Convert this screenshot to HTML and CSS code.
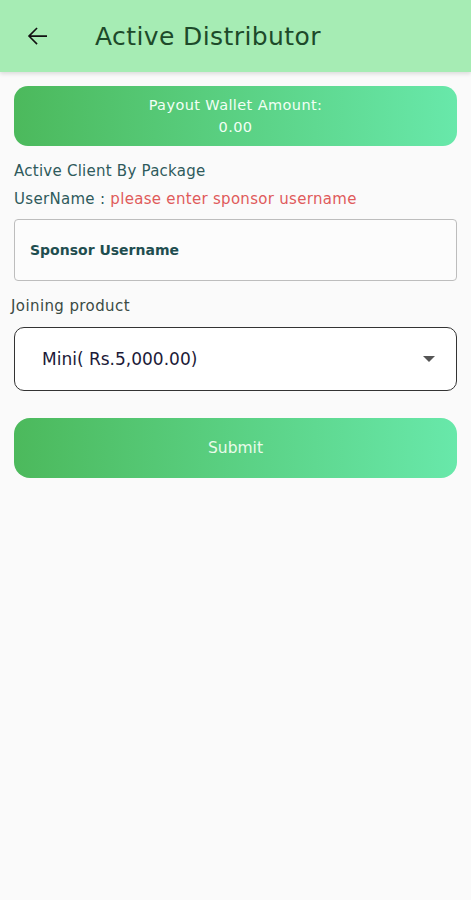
FILE: index.html
```html
<!doctype html>
<html lang="en">
  <head>
    <meta charset="UTF-8" />
    <title>Active Distributor</title>
    <link rel="stylesheet" href="styles.css">
  </head>
  <body>
    <header class="app-bar">
      <button class="back-button" aria-label="Back">
        <svg width="30" height="30" viewBox="0 0 24 24">
          <path d="M20 11.3H7.2l5.3-5.3-0.9-0.9L4.7 12l6.9 6.9 0.9-0.9-5.3-5.3H20z" fill="#111" />
        </svg>
      </button>
      <h1 class="app-title">Active Distributor</h1>
    </header>

    <main class="content">
      <div class="wallet-card">
        <div>Payout Wallet Amount:</div>
        <div>0.00</div>
      </div>

      <div class="section-label">Active Client By Package</div>
      <div class="username-row">
        UserName : <span class="error-text">please enter sponsor username</span>
      </div>

      <div class="input-box">
        <input type="text" placeholder="Sponsor Username" />
      </div>

      <div class="field-label">Joining product</div>
      <div class="select-box">
        <span>Mini( Rs.5,000.00)</span>
        <span class="caret"></span>
      </div>

      <button class="submit-button">Submit</button>
    </main>
  </body>
</html>
```

FILE: styles.css
```css
:root {
  --bar-green: #a6ecb4;
  --grad-start: #4cb95c;
  --grad-end: #68e8aa;
  --teal-text: #2f5a5c;
  --error-red: #e05a5a;
  --page-bg: #fafafa;
}

* {
  box-sizing: border-box;
  margin: 0;
  padding: 0;
}

body {
  font-family: "DejaVu Sans", "Open Sans", sans-serif;
  background-color: var(--page-bg);
  min-height: 900px;
}

.app-bar {
  height: 72px;
  background-color: var(--bar-green);
  display: flex;
  align-items: center;
  box-shadow: 0 2px 4px rgba(0, 0, 0, 0.12);
}

.back-button {
  background: none;
  border: none;
  width: 30px;
  height: 30px;
  margin-left: 22px;
  display: flex;
}

.app-title {
  margin-left: 43px;
  font-size: 25px;
  font-weight: 500;
  color: #1d4a2a;
  letter-spacing: 0.4px;
}

.content {
  padding: 14px 14px 0 14px;
  display: flex;
  flex-direction: column;
}

.wallet-card {
  height: 60px;
  border-radius: 14px;
  background: linear-gradient(90deg, var(--grad-start), var(--grad-end));
  color: #f2fff5;
  font-size: 14.5px;
  letter-spacing: 0.4px;
  text-align: center;
  display: flex;
  flex-direction: column;
  justify-content: center;
  gap: 5px;
  line-height: 17px;
}

.section-label {
  margin-top: 15px;
  font-size: 15px;
  letter-spacing: 0.25px;
  color: var(--teal-text);
  line-height: 20px;
}

.username-row {
  margin-top: 8px;
  font-size: 15px;
  letter-spacing: 0.3px;
  color: var(--teal-text);
  line-height: 20px;
}

.error-text {
  color: var(--error-red);
}

.input-box {
  margin-top: 10px;
  height: 62px;
  border: 1px solid #bdbdbd;
  border-radius: 4px;
  background: #fcfcfc;
  display: flex;
  align-items: center;
  padding-left: 15px;
}

.input-box input {
  border: none;
  background: none;
  outline: none;
  width: 100%;
  font-family: inherit;
  font-size: 14px;
}

.input-box input::placeholder {
  color: #1f4e50;
  font-weight: 600;
}

.field-label {
  margin-top: 15px;
  margin-left: -3px;
  font-size: 15px;
  letter-spacing: 0.4px;
  color: #3a4a44;
  line-height: 20px;
}

.select-box {
  margin-top: 11px;
  height: 64px;
  border: 1.5px solid #333;
  border-radius: 10px;
  background: #fff;
  display: flex;
  align-items: center;
  justify-content: space-between;
  padding: 0 21px 0 27px;
  font-size: 17px;
  color: #1c1a38;
}

.caret {
  width: 0;
  height: 0;
  border-left: 6px solid transparent;
  border-right: 6px solid transparent;
  border-top: 6px solid #555;
}

.submit-button {
  margin-top: 27px;
  height: 60px;
  border: none;
  border-radius: 16px;
  background: linear-gradient(90deg, var(--grad-start), var(--grad-end));
  color: #eafbea;
  font-family: inherit;
  font-size: 15.5px;
}
```
